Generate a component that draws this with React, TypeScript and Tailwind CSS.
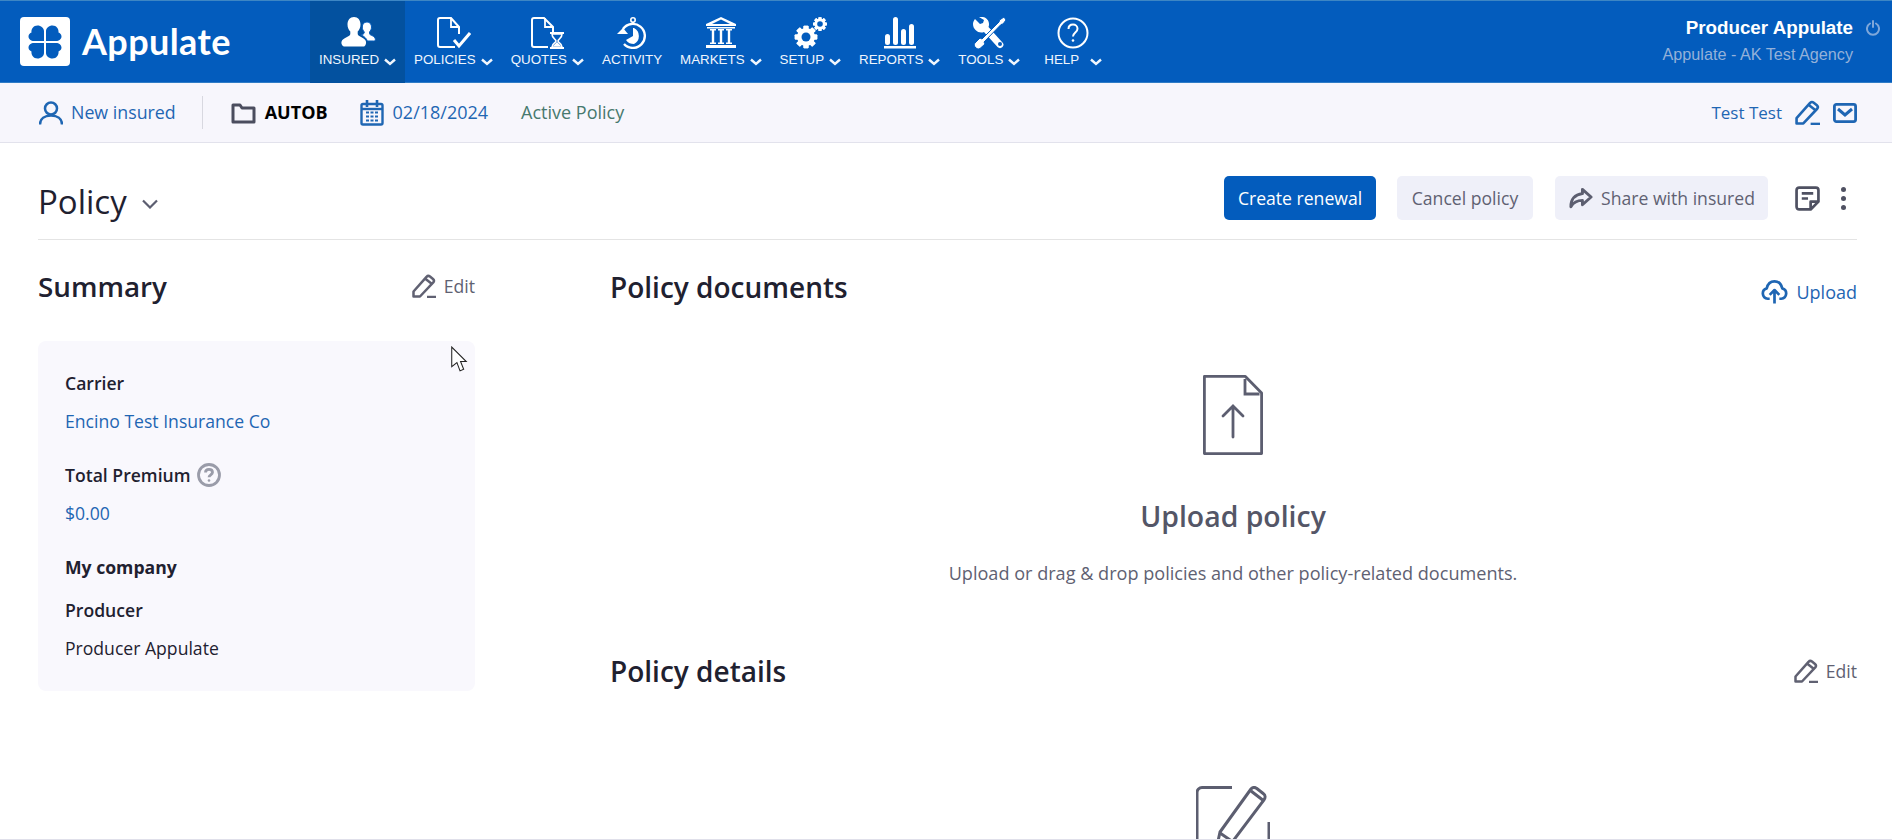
import type { ReactNode } from "react";

const NAV_ICON = "h-[32px] w-[36px] text-white";

function InsuredIcon() {
  return (
    <svg viewBox="0 0 36 32" className={NAV_ICON} fill="currentColor">
      <path d="M14 0c4 0 6.500 3 6.500 7.500 0 3-1.200 5.500-2.800 7v2.500c0 1.500 2 2.200 3.800 3.200 2.500 1.200 4 2.500 4.500 4.500 .3 1.500-.5 4.800-2.500 4.800H5c-2.500 0-4-2.300-3.500-4.800 .5-2 2.500-3.300 5-4.500 2-1 3.800-1.700 3.800-3.200v-2.500c-1.600-1.500-2.800-4-2.800-7C7.500 3 10 0 14 0z" />
      <path d="M27 5c2.800 0 4.500 2.200 4.500 5 0 2-.8 3.800-2 5v1.500c0 1.200 1.500 1.500 2.800 2.200 1.700 .8 2.700 1.800 3 3.200 .2 1-.3 2.100-1.500 2.100h-6.500c-.8-2.500-2.800-4.500-6-6 1.500-.6 3-1.200 3-2.500V15c-1.200-1.200-2-3-2-5 0-2.800 1.700-5 4.700-5z" stroke="#035cbd" strokeWidth="1" />
    </svg>
  );
}

function PoliciesIcon() {
  return (
    <svg viewBox="0 0 36 32" className={NAV_ICON} fill="none" stroke="currentColor" strokeWidth="2">
      <path d="M20 30H5a2 2 0 0 1-2-2V3a2 2 0 0 1 2-2h11l8 9v7" />
      <path d="M16 1v9h8" strokeWidth="1.800" />
      <path d="M19 23l5 6 11-13" strokeWidth="3" />
    </svg>
  );
}

function QuotesIcon() {
  return (
    <svg viewBox="0 0 36 32" className={NAV_ICON} fill="none" stroke="currentColor" strokeWidth="2">
      <path d="M19 30H5a2 2 0 0 1-2-2V3a2 2 0 0 1 2-2h10l9 9v5" />
      <path d="M16 1v9h8" strokeWidth="1.800" />
      <path d="M21 16h14M21 31h14" strokeWidth="2" />
      <path d="M23 17c0 5 4 5 4 7s-4 2-4 6h10c0-4-4-4-4-6s4-2 4-7z" strokeWidth="1.600" />
      <path d="M24 29l4-4 4 4z" fill="currentColor" stroke="none" />
    </svg>
  );
}

function ActivityIcon() {
  return (
    <svg viewBox="0 0 36 32" className={NAV_ICON} fill="none" stroke="currentColor" strokeWidth="2.400">
      <circle cx="19" cy="3" r="2.200" strokeWidth="1.600" />
      <path d="M19 5v3" strokeWidth="2" />
      <path d="M9 12a12 12 0 1 1 1 15" />
      <path d="M3 17h11l-5-6z" fill="currentColor" stroke="none" />
      <path d="M19 11v8l-7 4c2 3 5 4 8 4a9 9 0 0 0 0-16z" fill="currentColor" stroke="none" />
    </svg>
  );
}

function MarketsIcon() {
  return (
    <svg viewBox="0 0 36 32" className={NAV_ICON} fill="currentColor">
      <path d="M18 0L33 7v2H3V7zM18 2.500L9 7h18z" fillRule="evenodd" />
      <path d="M4 10h28v1.500H4zM7 12h6v1.500h-1.800v12H13V27H7v-1.500h1.800v-12H7zM15 12h6v1.500h-1.800v12H21V27h-6v-1.500h1.800v-12H15zM23 12h6v1.500h-1.800v12H29V27h-6v-1.500h1.800v-12H23zM3 28h30v3H3z" />
    </svg>
  );
}

function Gear({ cx, cy, r, hole }: { cx: number; cy: number; r: number; hole: number }) {
  const teeth = [0, 45, 90, 135, 180, 225, 270, 315];
  return (
    <g>
      {teeth.map((a) => (
        <rect
          key={a}
          x={cx - r * 0.28}
          y={cy - r * 1.25}
          width={r * 0.56}
          height={r * 2.5}
          rx={r * 0.08}
          transform={`rotate(${a} ${cx} ${cy})`}
        />
      ))}
      <circle cx={cx} cy={cy} r={r} />
      <circle cx={cx} cy={cy} r={hole} fill="#035cbd" />
    </g>
  );
}

function SetupIcon() {
  return (
    <svg viewBox="0 0 36 32" className={NAV_ICON} fill="currentColor">
      <Gear cx={14} cy={20} r={9} hole={4.500} />
      <Gear cx={28} cy={7} r={5.500} hole={2.800} />
    </svg>
  );
}

function ReportsIcon() {
  return (
    <svg viewBox="0 0 36 32" className={NAV_ICON} fill="currentColor">
      <rect x="3" y="17" width="5" height="11" rx="2.500" />
      <rect x="11" y="0" width="5" height="28" rx="2.500" />
      <rect x="19" y="12" width="5" height="16" rx="2.500" />
      <rect x="27" y="7" width="5" height="21" rx="2.500" />
      <rect x="2" y="29" width="32" height="2.500" />
    </svg>
  );
}

function ToolsIcon() {
  return (
    <svg viewBox="0 0 36 32" className={NAV_ICON} fill="currentColor">
      <path d="M4 2l5 5 3-1 1-3-5-3c5-1 10 2 10 7 0 1 0 2-.5 3L31 25c2 2 2 3.500 .5 5s-3.500 1.500-5 0L13 15c-5 2-11-2-11-8 0-2 1-4 2-5z" />
      <path d="M33 0l2 3-3 4-2 .5L13 25l1 2-5 4.500c-1.500 1-4 0-5-1.500-1-1.500-1-3 0-4l5-5 2 1L28 5l.5-2z" stroke="#035cbd" strokeWidth="1" />
      <circle cx="29" cy="27" r="2" fill="#035cbd" />
    </svg>
  );
}

function HelpIcon() {
  return (
    <svg viewBox="0 0 36 32" className={NAV_ICON} fill="none" stroke="currentColor">
      <circle cx="18" cy="16" r="14.500" strokeWidth="2" />
      <path d="M13.500 12c0-3 2-4.500 4.500-4.500s4.500 1.600 4.500 4.200c0 3.800-4.500 3.800-4.500 7.800" strokeWidth="2" />
      <circle cx="18" cy="23.500" r="1.300" fill="currentColor" stroke="none" />
    </svg>
  );
}

function Clover() {
  return (
    <svg viewBox="0 0 34 34" className="h-[34px] w-[34px]" fill="#035cbd">
      <path d="M16 16H6c-3 0-5.500-2-5.500-4.600C.5 9.400 2 8 3.500 7.500 3 4 5.500.5 9.500.5 13 .5 16 3 16 6z" />
      <path d="M18 16h10c3 0 5.500-2 5.500-4.600 0-2-1.500-3.400-3-3.900C31 4 28.500.5 24.500.5 21 .5 18 3 18 6z" />
      <path d="M16 18H6c-3 0-5.500 2-5.500 4.600 0 2 1.500 3.400 3 3.900-.5 3.500 2 7 6 7 3.500 0 6.500-2.500 6.500-5.500z" />
      <path d="M18 18h10c3 0 5.500 2 5.500 4.600 0 2-1.500 3.400-3 3.900 .5 3.500-2 7-6 7-3.500 0-6.500-2.500-6.500-5.500z" />
    </svg>
  );
}

function PencilIcon({ className }: { className: string }) {
  return (
    <svg viewBox="0 0 24 24" className={className} fill="none" stroke="currentColor" strokeWidth="2.500" strokeLinejoin="round">
      <path d="M1.500 22.500v-5L14.500 2.800c1-1 2.500-1 3.500-.2l3 2.400c1 .9 1.200 2.300 .3 3.400L8 22.500z" />
      <path d="M13 4.500l7 5.500" />
      <path d="M15 23h9" strokeWidth="2.500" />
    </svg>
  );
}

const NAV_ITEMS: { label: string; icon: ReactNode; menu?: boolean; active?: boolean; wide?: boolean }[] = [
  { label: "INSURED", icon: <InsuredIcon />, menu: true, active: true },
  { label: "POLICIES", icon: <PoliciesIcon />, menu: true },
  { label: "QUOTES", icon: <QuotesIcon />, menu: true },
  { label: "ACTIVITY", icon: <ActivityIcon /> },
  { label: "MARKETS", icon: <MarketsIcon />, menu: true },
  { label: "SETUP", icon: <SetupIcon />, menu: true },
  { label: "REPORTS", icon: <ReportsIcon />, menu: true },
  { label: "TOOLS", icon: <ToolsIcon />, menu: true },
  { label: "HELP", icon: <HelpIcon />, menu: true, wide: true },
];

function NavItem({ label, icon, menu, active, wide }: (typeof NAV_ITEMS)[number]) {
  return (
    <div className={`flex h-[82px] flex-col items-center pt-[16px] ${wide ? "pr-[9px] pl-[15px]" : "px-[9px]"} ${active ? "bg-[#03519f]" : ""}`}>
      {icon}
      <div className="mt-[1px] flex items-center text-[13.350px] leading-[20px] text-[#f0f6fd]">
        {label}
        {menu && (
          <svg viewBox="0 0 12 8" className={`h-[8px] w-[12px] ${wide ? "ml-[11px]" : "ml-[5px]"} mt-[3px]`} fill="none" stroke="currentColor" strokeWidth="2.400">
            <path d="M1 1.500l5 4.500 5-4.500" />
          </svg>
        )}
      </div>
    </div>
  );
}

function Header() {
  return (
    <header className="flex h-[83px] shrink-0 items-start border-t border-b border-t-[#3d86c4] border-b-[#2f7cc6] bg-[#035cbd] font-['Liberation_Sans',Arial,sans-serif]">
      <div className="flex w-[310px] items-center pl-[20px] pt-[16px]">
        <div className="flex h-[49px] w-[50px] items-center justify-center rounded-[4px] bg-white">
          <Clover />
        </div>
        <span className="ml-[12px] font-['Lato',sans-serif] text-[36px] leading-[49px] font-bold tracking-[0.4px] text-white">Appulate</span>
      </div>
      <nav className="flex">
        {NAV_ITEMS.map((item) => (
          <NavItem key={item.label} {...item} />
        ))}
      </nav>
      <div className="ml-auto flex flex-col items-end pt-[15px] pr-[12px]">
        <div className="flex items-center">
          <span className="text-[18.800px] leading-[24px] font-bold text-white">Producer Appulate</span>
          <svg viewBox="0 0 14 16" className="ml-[13px] h-[16px] w-[14px] text-[#7ea7da]" fill="none" stroke="currentColor" strokeWidth="2" strokeLinecap="round">
            <path d="M7 1v6" />
            <path d="M4 3.500a6 6 0 1 0 6 0" />
          </svg>
        </div>
        <span className="mr-[27px] mt-[4px] text-[16.200px] leading-[20px] text-[#94b1d9]">Appulate - AK Test Agency</span>
      </div>
    </header>
  );
}

function SubBar() {
  return (
    <div className="flex h-[60px] shrink-0 items-center border-b border-[#e2e2ec] bg-[#f7f6fc] pr-[35px] pl-[39px] text-[18px] text-[#1f66b3]">
      <svg viewBox="0 0 24 24" className="h-[25px] w-[24px]" fill="none" stroke="currentColor" strokeWidth="2.500">
        <circle cx="12" cy="8" r="6" />
        <path d="M1 24c0-6 5-9 11-9s11 3 11 9" />
      </svg>
      <span className="ml-[8px] text-[17.800px]">New insured</span>
      <div className="mr-[28px] ml-[26px] h-[33px] w-px bg-[#d8d8e0]" />
      <svg viewBox="0 0 25 22" className="h-[22px] w-[25px] text-[#4b4d5e]" fill="none" stroke="currentColor" strokeWidth="3">
        <path d="M2 20V3h7l2 3h12v14z" strokeLinejoin="round" />
      </svg>
      <span className="ml-[9px] font-bold text-black">AUTOB</span>
      <svg viewBox="0 0 24 26" className="ml-[32px] h-[26px] w-[24px]" fill="none" stroke="currentColor" strokeWidth="2.400">
        <rect x="1.500" y="4" width="21" height="20.500" rx="1.500" />
        <path d="M7 0v7M17 0v7" strokeWidth="2.600" />
        <path d="M1.500 9h21" />
        <path d="M6 12.500h3M10.500 12.500h3M15 12.500h3M6 16.500h3M10.500 16.500h3M15 16.500h3M6 20.500h3M10.500 20.500h3M15 20.500h3" strokeWidth="2" />
      </svg>
      <span className="ml-[9px]">02/18/2024</span>
      <span className="ml-[33px] text-[#47796e]">Active Policy</span>
      <span className="ml-auto text-[17px]">Test Test</span>
      <PencilIcon className="ml-[13px] h-[25px] w-[25px]" />
      <svg viewBox="0 0 24 20" className="ml-[13px] h-[20px] w-[24px]" fill="none" stroke="currentColor" strokeWidth="2.800">
        <rect x="1.400" y="1.400" width="21.200" height="17.200" rx="2" />
        <path d="M5 6l7 6L19 6" strokeWidth="3" />
      </svg>
    </div>
  );
}

function TitleRow() {
  return (
    <div className="flex h-[97px] shrink-0 items-start border-b border-[#e4e4e4]">
      <div className="mt-[36px] flex items-center text-[#1f2130]">
        <span className="text-[33px] leading-[46px] font-normal">Policy</span>
        <svg viewBox="0 0 16 10" className="mt-[4px] ml-[15px] h-[10px] w-[16px] text-[#5c5e70]" fill="none" stroke="currentColor" strokeWidth="2.200">
          <path d="M1 1.500l7 7 7-7" />
        </svg>
      </div>
      <div className="mt-[33px] ml-auto flex items-center text-[17.600px]">
        <button className="h-[44px] w-[152px] rounded-[5px] bg-[#035cbd] text-white">Create renewal</button>
        <button className="ml-[21px] h-[44px] w-[136px] rounded-[5px] bg-[#eff0f9] text-[#606172]">Cancel policy</button>
        <button className="ml-[22px] flex h-[44px] w-[213px] items-center justify-center rounded-[5px] bg-[#eff0f9] text-[#606172]">
          <svg viewBox="0 0 26 24" className="mr-[8px] h-[24px] w-[25px] text-[#5c5e70]" fill="none" stroke="currentColor" strokeWidth="3" strokeLinejoin="round">
            <path d="M15 3l9 8-9 8v-4.500c-5 0-9 1.500-12 6.500 0-8 4-12.500 12-13.500z" />
          </svg>
          Share with insured
        </button>
        <svg viewBox="0 0 24 24" className="ml-[27px] h-[25px] w-[25px] text-[#4f5162]" fill="none" stroke="currentColor" strokeWidth="2.600" strokeLinejoin="round">
          <path d="M15 22.500H4a2.500 2.500 0 0 1-2.500-2.500V4A2.500 2.500 0 0 1 4 1.500h16A2.500 2.500 0 0 1 22.500 4v11z" />
          <path d="M15 22.500V15h7.500" />
          <path d="M6.500 7h11M6.500 12h6" />
        </svg>
        <div className="mr-[11px] ml-[21px] flex flex-col gap-[4px]">
          <span className="h-[5px] w-[5px] rounded-full bg-[#4f5162]" />
          <span className="h-[5px] w-[5px] rounded-full bg-[#4f5162]" />
          <span className="h-[5px] w-[5px] rounded-full bg-[#4f5162]" />
        </div>
      </div>
    </div>
  );
}

function Summary() {
  return (
    <aside className="relative w-[437px] shrink-0">
      <div className="mt-[27px] flex h-[40px] items-center justify-between">
        <h2 className="text-[27.800px] font-semibold text-[#1f2130]">Summary</h2>
        <div className="-mt-[2px] flex items-center text-[17.600px] text-[#606172]">
          <PencilIcon className="h-[24px] w-[24px]" />
          <span className="ml-[8px]">Edit</span>
        </div>
      </div>
      <div className="mt-[34px] h-[350px] rounded-[8px] bg-[#f9f8fd] px-[27px] pt-[29px] text-[17.600px] leading-[26px] text-[#1f2130]">
        <div className="font-semibold">Carrier</div>
        <div className="mt-[12px] text-[#1f66b3]">Encino Test Insurance Co</div>
        <div className="mt-[28px] flex items-center font-semibold">
          Total Premium
          <svg viewBox="0 0 24 24" className="ml-[6px] h-[24px] w-[24px] text-[#9a9ca9]" fill="none" stroke="currentColor" strokeWidth="2.800">
            <circle cx="12" cy="12" r="10.500" />
            <path d="M8.500 9.500c0-2 1.500-3.200 3.500-3.200s3.500 1.200 3.500 3c0 2.500-3.500 2.500-3.500 5" />
            <circle cx="12" cy="17.500" r="1.300" fill="currentColor" stroke="none" />
          </svg>
        </div>
        <div className="mt-[12px] text-[#1f66b3]">$0.00</div>
        <div className="mt-[28px] font-bold">My company</div>
        <div className="mt-[17px] font-semibold">Producer</div>
        <div className="mt-[12px]">Producer Appulate</div>
      </div>
      <svg viewBox="0 0 16 27" className="absolute top-[106px] left-[412px] h-[28px] w-[18px]" fill="#fff" stroke="#222" strokeWidth="1">
        <path d="M1 1v19l5-4 3 8 3.500-1.500-3-7.500H15z" />
      </svg>
    </aside>
  );
}

function Documents() {
  return (
    <section className="min-w-0 flex-1">
      <div className="mt-[27px] flex h-[40px] items-center justify-between">
        <h2 className="text-[28px] font-semibold text-[#1f2130]">Policy documents</h2>
        <div className="mt-[10px] flex items-center text-[18px] text-[#1f66b3]">
          <svg viewBox="0 0 28 26" className="h-[26px] w-[27px]" fill="none" stroke="currentColor" strokeWidth="2.800" strokeLinejoin="round">
            <path d="M9 20H7a5.500 5.500 0 0 1-1-10.800C7 4.500 10 2 14 2s7 2.500 8 7.200A5.500 5.500 0 0 1 21 20h-2" />
            <path d="M14 25V11M9 16l5-5 5 5" />
          </svg>
          <span className="ml-[8px]">Upload</span>
        </div>
      </div>
      <div className="mt-[68px] flex flex-col items-center pr-[1px]">
        <svg viewBox="0 0 60 80" className="h-[80px] w-[60px] text-[#5c5e70]" fill="none" stroke="currentColor" strokeWidth="2.800">
          <path d="M1.400 1.400h41L58.600 18v60.600H1.400z" strokeLinejoin="round" />
          <path d="M42 4v15h14.500" />
          <path d="M30 62V32M20 41l10-10 10 10" strokeLinecap="round" />
        </svg>
        <h3 className="mt-[42px] text-[28.400px] leading-[38px] font-semibold text-[#545667]">Upload policy</h3>
        <p className="mt-[26px] text-[18.100px] leading-[24px] text-[#606172]">Upload or drag &amp; drop policies and other policy-related documents.</p>
      </div>
      <div className="mt-[66px] flex h-[40px] items-center justify-between">
        <h2 className="text-[28px] font-semibold text-[#1f2130]">Policy details</h2>
        <div className="flex items-center text-[17.600px] text-[#606172]">
          <PencilIcon className="h-[24px] w-[24px]" />
          <span className="ml-[8px]">Edit</span>
        </div>
      </div>
      <div className="mt-[95px] flex justify-center pr-[2px]">
        <svg viewBox="0 0 74 80" className="h-[80px] w-[74px] text-[#5c5e70]" fill="none" stroke="currentColor" strokeWidth="3" strokeLinejoin="round">
          <path d="M36 1.500H6a5 5 0 0 0-5 5V75a4 4 0 0 0 4 4h64a4 4 0 0 0 4-4V36" />
          <path d="M21 60l3-14L55 3c1.500-2 4-2 5.500-.7l7 5.500c2 1.500 2 4 .5 6L37 55z" />
          <path d="M55 5l13 10M24 47l13 9" />
        </svg>
      </div>
    </section>
  );
}

export default function App() {
  return (
    <div className="flex h-[840px] w-[1892px] flex-col overflow-hidden border-b border-[#e0e0ea] bg-white font-['Open_Sans',sans-serif]">
      <Header />
      <SubBar />
      <main className="flex min-h-0 flex-1 flex-col pr-[35px] pl-[38px]">
        <TitleRow />
        <div className="flex gap-[135px]">
          <Summary />
          <Documents />
        </div>
      </main>
    </div>
  );
}
